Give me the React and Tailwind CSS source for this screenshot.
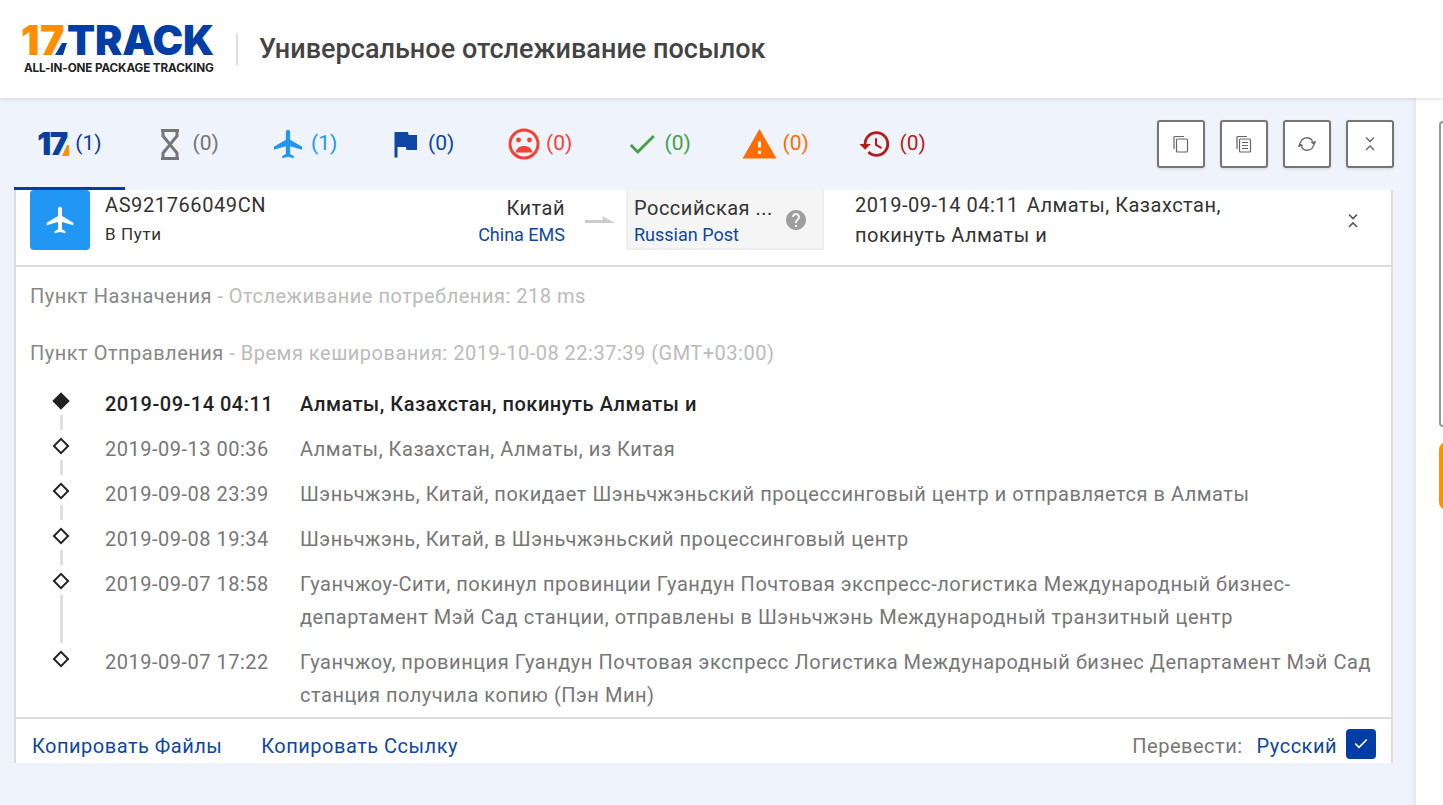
import { MdAirplanemodeActive, MdFlag, MdCheck, MdWarning, MdHistory, MdHelp } from 'react-icons/md';
import { Check } from 'lucide-react';

const Logo17 = () => (
  <span className="relative inline-block w-[32px] text-[31px] leading-[24px] font-black tracking-[-0.05em] text-[#0b3f9e] font-['Inter',sans-serif]">
    17
    <svg className="absolute right-0 bottom-0" width="7" height="11" viewBox="0 0 7 11"><path d="M0 11L5 0l2 0v11z" fill="#ff8f00" /></svg>
  </span>
);

const Hourglass = () => (
  <svg width="20" height="31" viewBox="0 0 20 31" fill="none" stroke="#757575" strokeWidth="3">
    <path d="M1 1.500h18M1 29.500h18M3 2v5l7 8.500 7-8.500V2M3 29v-5l7-8.500 7 8.500v5" />
  </svg>
);

const SadFace = () => (
  <svg width="32" height="32" viewBox="0 0 32 32">
    <circle cx="16" cy="16" r="14" fill="none" stroke="#f44336" strokeWidth="3" />
    <circle cx="10.500" cy="12" r="2.400" fill="#f44336" />
    <circle cx="21.500" cy="12" r="2.400" fill="#f44336" />
    <path d="M7.500 24.500c1-4.500 4.500-6.500 8.500-6.500s7.500 2 8.500 6.500z" fill="#f44336" />
  </svg>
);

const tabs = [
  { key: 'wait', icon: <Hourglass />, count: '(0)', color: 'text-[#757575]', cls: 'gap-[13px] pl-[5px]' },
  { key: 'transit', icon: <MdAirplanemodeActive size={34} color="#2196f3" />, count: '(1)', color: 'text-[#2196f3]', cls: 'gap-[6px]' },
  { key: 'arrived', icon: <MdFlag size={36} color="#0d47a1" />, count: '(0)', color: 'text-[#0d47a1]', cls: 'gap-[5px] pr-[2px]' },
  { key: 'fail', icon: <SadFace />, count: '(0)', color: 'text-[#f44336]', cls: 'gap-[6px] pl-[2px]' },
  { key: 'ok', icon: <MdCheck size={34} color="#43a047" />, count: '(0)', color: 'text-[#43a047]', cls: 'gap-[6px] pl-[2px]' },
  { key: 'warn', icon: <MdWarning size={37} color="#ff6d00" />, count: '(0)', color: 'text-[#ff6d00]', cls: 'gap-[5px] pl-[1px]' },
  { key: 'old', icon: <MdHistory size={34} color="#b71c1c" />, count: '(0)', color: 'text-[#b71c1c]', cls: 'gap-2' },
];

const CopyIcon = () => (
  <svg width="18" height="18" viewBox="0 0 18 18" fill="none" stroke="#666" strokeWidth="1.200">
    <path d="M2 14V2.500a1 1 0 0 1 1-1h9" />
    <rect x="4.500" y="4" width="11" height="13" rx="1" />
  </svg>
);

const CopyListIcon = () => (
  <svg width="18" height="18" viewBox="0 0 18 18" fill="none" stroke="#666" strokeWidth="1.200">
    <path d="M2 14V2.500a1 1 0 0 1 1-1h9" />
    <rect x="4.500" y="4" width="11" height="13" rx="1" />
    <path d="M7 7.500h6M7 10.500h6M7 13.500h6" />
  </svg>
);

const SyncIcon = () => (
  <svg width="20" height="18" viewBox="0 0 20 18" fill="none" stroke="#666" strokeWidth="1.300">
    <path d="M3.500 8a6.500 6 0 0 1 11-3.500l1 2" />
    <path d="M16.500 10a6.500 6 0 0 1-11 3.500l-1-2" />
    <path d="M13.500 7l5.500-1-1.500 4.500z" fill="#666" stroke="none" />
    <path d="M6.500 11L1 12l1.500-4.500z" fill="#666" stroke="none" />
  </svg>
);

const Collapse = ({ color = '#666', sw = 1.400 }) => (
  <svg width="12" height="16" viewBox="0 0 12 16" fill="none" stroke={color} strokeWidth={sw}>
    <path d="M2 1.500l4 4 4-4M2 14l4-4 4 4" />
  </svg>
);

const toolButtons = [
  { key: 'copy', icon: <CopyIcon /> },
  { key: 'list', icon: <CopyListIcon /> },
  { key: 'sync', icon: <SyncIcon /> },
  { key: 'collapse', icon: <Collapse /> },
];

const events = [
  { time: '2019-09-14 04:11', text: 'Алматы, Казахстан, покинуть Алматы и', current: true },
  { time: '2019-09-13 00:36', text: 'Алматы, Казахстан, Алматы, из Китая' },
  { time: '2019-09-08 23:39', text: 'Шэньчжэнь, Китай, покидает Шэньчжэньский процессинговый центр и отправляется в Алматы' },
  { time: '2019-09-08 19:34', text: 'Шэньчжэнь, Китай, в Шэньчжэньский процессинговый центр' },
  { time: '2019-09-07 18:58', text: 'Гуанчжоу-Сити, покинул провинции Гуандун Почтовая экспресс-логистика Международный бизнес-департамент Мэй Сад станции, отправлены в Шэньчжэнь Международный транзитный центр' },
  { time: '2019-09-07 17:22', text: 'Гуанчжоу, провинция Гуандун Почтовая экспресс Логистика Международный бизнес Департамент Мэй Сад станция получила копию (Пэн Мин)', last: true },
];

const EventRow = ({ time, text, current, last }) => (
  <div className={`flex text-[20px] tracking-[0.53px] leading-[33px] pt-[7px] pb-[5px] ${current ? 'font-medium text-[#222]' : 'text-[#777]'}`}>
    <div className="w-[60px] shrink-0 flex flex-col items-center -mt-[7px] -mb-[5px] pt-[12px] ml-[15px] mr-[14px]">
      <div className={`w-[12px] h-[12px] my-[2px] rotate-45 border-2 border-[#222] shrink-0 ${current ? 'bg-[#222]' : 'bg-white'}`} />
      {!last && <div className="w-[3px] flex-1 mt-[6px] -mb-[4px] bg-[#e0e0e0]" />}
    </div>
    <div className="w-[195px] shrink-0 whitespace-nowrap tracking-[0.5px]">{time}</div>
    <div className="w-[1077px]">{text}</div>
  </div>
);

export default function App() {
  return (
    <div className="w-[1443px] h-[805px] overflow-hidden flex flex-col bg-white font-['Roboto',sans-serif]">
      <header className="h-[98px] shrink-0 flex items-center bg-white pl-[21px] shadow-[0_1px_4px_rgba(0,0,0,0.15)] relative z-10">
        <div className="w-[193px] flex flex-col items-stretch">
          <div className="relative h-[32px] flex items-center text-[41px] leading-[32px] font-black font-['Inter',sans-serif] whitespace-nowrap">
            <span className="text-[#ff8f00] w-[47px] tracking-[0.01em]">17</span>
            <span className="text-[#003da5] tracking-[-0.005em]">TRACK</span>
            <svg className="absolute left-[34px] bottom-[1px]" width="12" height="12" viewBox="0 0 12 12"><path d="M0 12L7 0h5L8 12z" fill="#003da5" /></svg>
          </div>
          <div className="mt-[5px] text-[11.700px] leading-[14px] font-bold text-[#222] whitespace-nowrap font-['Inter',sans-serif] tracking-[-0.01em] pl-[3px]">ALL-IN-ONE PACKAGE TRACKING</div>
        </div>
        <div className="w-[2px] h-[32px] bg-[#ddd] ml-[22px] mr-[21px]" />
        <h1 className="text-[27px] tracking-[0.03px] font-medium text-[#444] whitespace-nowrap">Универсальное отслеживание посылок</h1>
      </header>

      <div className="flex-1 flex min-h-0">
        <main className="w-[1416px] shrink-0 bg-[#eff3fb] pl-[14px] shadow-[inset_-5px_0_5px_-4px_rgba(0,0,0,0.08)]">
          <div className="h-[92px] flex items-stretch pr-[22px]">
            <div className="w-[111px] mr-[3px] flex items-center justify-center gap-[6px] text-[21px] pt-[2px] text-[#0b3f9e] border-b-[3px] border-[#003da5]">
              <Logo17 />
              <span>(1)</span>
            </div>
            {tabs.map((t) => (
              <div key={t.key} className={`w-[117.500px] flex items-center justify-center ${t.cls} text-[21px] ${t.color}`}>
                {t.icon}
                <span>{t.count}</span>
              </div>
            ))}
            <div className="ml-auto flex items-start pt-[22px] gap-[15px]">
              {toolButtons.map((b) => (
                <button key={b.key} className="w-[48px] h-[48px] bg-white rounded-[3px] border-2 border-[#757575] flex items-center justify-center shadow-[0_1px_3px_rgba(0,0,0,0.12)]">
                  {b.icon}
                </button>
              ))}
            </div>
          </div>

          <div className="w-[1379px] bg-white border-x-2 border-[#ddd]">
            <div className="h-[77px] flex border-b-2 border-[#ddd] -mx-[1px] pl-[15px]">
              <div className="w-[60px] h-[60px] rounded-[4px] bg-[#2196f3] flex items-center justify-center shrink-0">
                <MdAirplanemodeActive size={32} color="#fff" />
              </div>
              <div className="w-[200px] ml-[15px] shrink-0 pt-[1px]">
                <div className="text-[20px] tracking-[0.6px] leading-[29px] text-[#333]">AS921766049CN</div>
                <div className="text-[17px] tracking-[0.6px] leading-[29px] text-[#333]">В Пути</div>
              </div>
              <div className="w-[260px] text-right shrink-0">
                <div className="text-[20px] tracking-[0.5px] leading-[36px] text-[#333]">Китай</div>
                <div className="text-[18px] leading-[18px] text-[#0d47a1]">China EMS</div>
              </div>
              <div className="w-[61px] h-[60px] shrink-0 flex items-center justify-end pr-[11px]">
                <svg width="30" height="12" viewBox="0 0 30 12"><path d="M0 6h18l-1-4 13 7H0z" fill="#ccc" /></svg>
              </div>
              <div className="w-[198px] h-[60px] shrink-0 bg-[#f5f5f5] border-2 border-t-0 border-[#eee] flex items-start pl-[6px] pr-[14px]">
                <div className="flex-1 min-w-0">
                  <div className="text-[20px] tracking-[0.5px] leading-[36px] text-[#333] whitespace-nowrap">Российская ...</div>
                  <div className="text-[18px] leading-[18px] text-[#0d47a1]">Russian Post</div>
                </div>
                <div className="pt-[18px]"><MdHelp size={24} color="#9e9e9e" /></div>
              </div>
              <div className="w-[400px] ml-[31px] shrink-0 text-[20px] tracking-[0.5px] leading-[30px] text-[#333]">
                <div className="whitespace-nowrap">2019-09-14 04:11<span className="ml-[8px]">Алматы, Казахстан,</span></div>
                <div>покинуть Алматы и</div>
              </div>
              <div className="ml-[92px] pt-[23px]">
                <Collapse color="#555" sw={1.600} />
              </div>
            </div>

            <div className="h-[114px] pl-[14px] pt-[1px] text-[20px] tracking-[0.5px] leading-[57px] text-[#888]">
              <div>Пункт Назначения <span className="text-[#bbb]">- Отслеживание потребления: 218 ms</span></div>
              <div>Пункт Отправления <span className="text-[#bbb]">- Время кеширования: 2019-10-08 22:37:39 (GMT+03:00)</span></div>
            </div>

            <div>
              {events.map((e) => (
                <EventRow key={e.time} {...e} />
              ))}
            </div>

            <div className="h-[46px] border-t-2 border-[#ddd] -mx-[1px] flex items-start pt-[10px] pl-[17px] pr-[16px] text-[20px] tracking-[0.5px] leading-[34px] text-[#0d47a1]">
              <span>Копировать Файлы</span>
              <span className="ml-[39px]">Копировать Ссылку</span>
              <span className="ml-auto text-[#777]">Перевести:</span>
              <span className="ml-[14px]">Русский</span>
              <span className="ml-[9px] w-[30px] h-[30px] rounded-[4px] bg-[#003da5] flex items-center justify-center">
                <Check size={16} color="#fff" strokeWidth={2.500} />
              </span>
            </div>
          </div>
        </main>

        <aside className="flex-1 bg-white pl-[23px] pt-[23px] flex flex-col gap-[15px] overflow-hidden">
          <div className="w-[40px] h-[306px] rounded-[4px] bg-[#fff] border-2 border-[#999]" />
          <div className="w-[40px] h-[68px] rounded-[8px] bg-[#ff8f00]" />
        </aside>
      </div>
    </div>
  );
}
